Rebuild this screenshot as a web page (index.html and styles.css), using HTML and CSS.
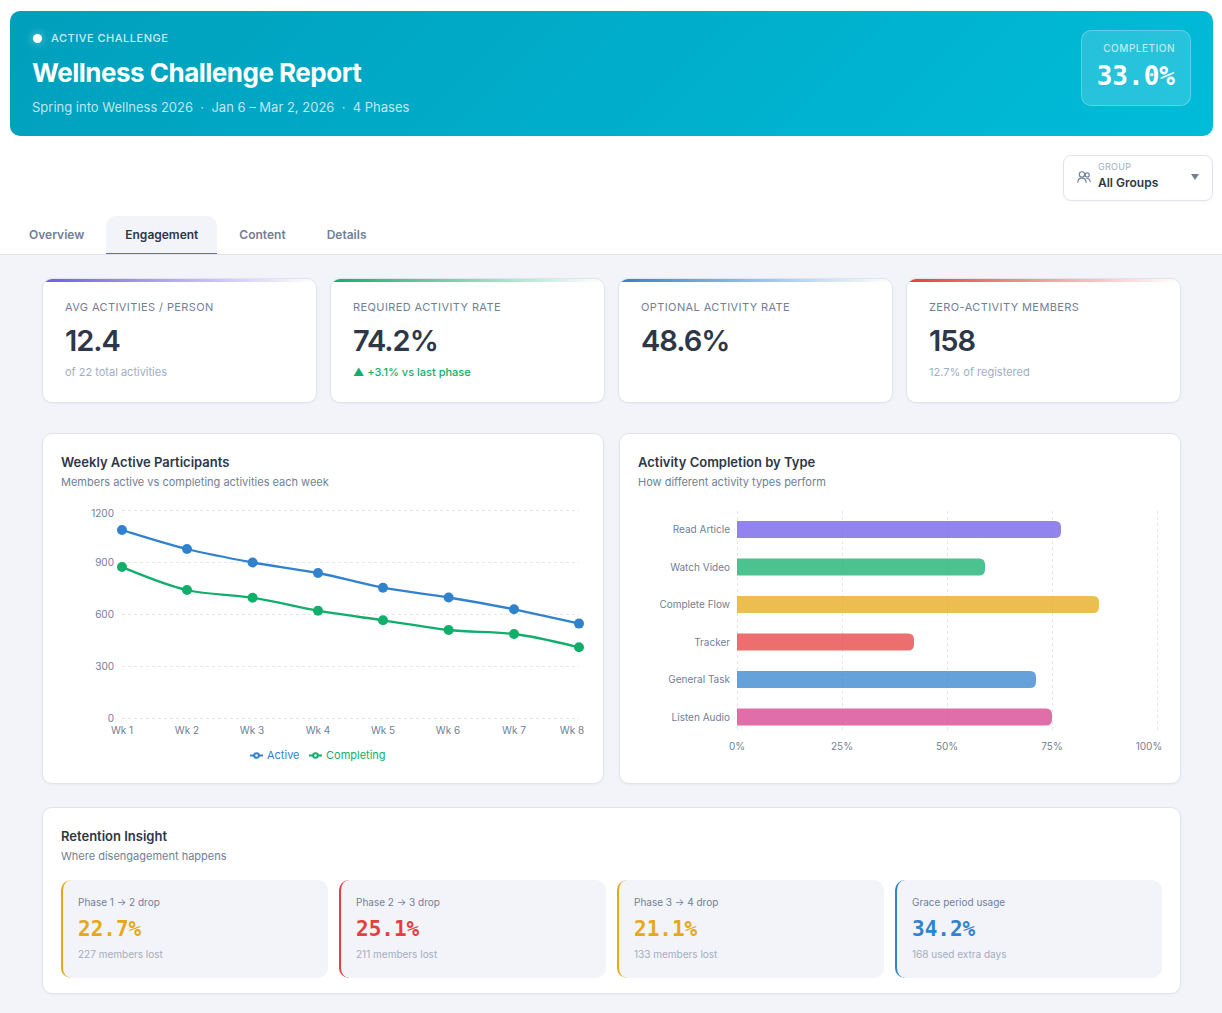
FILE: index.html
```html
<!DOCTYPE html>
<html lang="en">
<head>
    <meta charset="UTF-8">
    <meta name="viewport" content="width=device-width, initial-scale=1.0">
    <title>Wellness Challenge Report</title>
    <link rel="stylesheet" href="styles.css">
</head>
<body>
    <div class="top">
        <header class="hero">
            <div>
                <div class="hero-status"><span class="dot"></span>Active Challenge</div>
                <h1>Wellness Challenge Report</h1>
                <p class="hero-meta">Spring into Wellness 2026 &nbsp;·&nbsp; Jan 6 – Mar 2, 2026 &nbsp;·&nbsp; 4 Phases</p>
            </div>
            <div class="completion">
                <div class="completion-label">Completion</div>
                <div class="completion-value">33.0%</div>
            </div>
        </header>

        <div class="filters">
            <div class="filter">
                <svg class="filter-icon" viewBox="0 0 24 24" aria-hidden="true">
                    <circle cx="8.5" cy="7.5" r="4.5"/>
                    <path d="M1.500 21c0-4.500 3-7 7-7s7 2.500 7 7"/>
                    <circle cx="17.500" cy="8.500" r="3.500"/>
                    <path d="M17 14.500c3.500 0 5.500 2 5.500 5.500"/>
                </svg>
                <div class="filter-field">
                    <label for="group">Group</label>
                    <select id="group">
                        <option>All Groups</option>
                    </select>
                </div>
                <span class="filter-arrow" aria-hidden="true"></span>
            </div>
        </div>

        <nav class="tabs">
            <button class="tab">Overview</button>
            <button class="tab active">Engagement</button>
            <button class="tab">Content</button>
            <button class="tab">Details</button>
        </nav>
    </div>

    <main>
        <section class="stats">
            <div class="card stat purple">
                <div class="stat-label">Avg Activities / Person</div>
                <div class="stat-value">12.4</div>
                <div class="stat-note">of 22 total activities</div>
            </div>
            <div class="card stat green">
                <div class="stat-label">Required Activity Rate</div>
                <div class="stat-value">74.2%</div>
                <div class="stat-note up">▲ +3.1% vs last phase</div>
            </div>
            <div class="card stat blue">
                <div class="stat-label">Optional Activity Rate</div>
                <div class="stat-value">48.6%</div>
            </div>
            <div class="card stat red">
                <div class="stat-label">Zero-Activity Members</div>
                <div class="stat-value">158</div>
                <div class="stat-note">12.7% of registered</div>
            </div>
        </section>

        <section class="charts">
            <div class="card panel">
                <h2>Weekly Active Participants</h2>
                <p class="subtitle">Members active vs completing activities each week</p>
                <svg class="chart" viewBox="0 0 524 262">
                    <g class="grid">
                        <path d="M61 4.500H518M61 56.500H518M61 108.500H518M61 160.500H518M61 212.500H518"/>
                    </g>
                    <g class="axis end">
                        <text x="53" y="11">1200</text>
                        <text x="53" y="60">900</text>
                        <text x="53" y="112">600</text>
                        <text x="53" y="164">300</text>
                        <text x="53" y="216">0</text>
                    </g>
                    <g class="axis middle">
                        <text x="61" y="228">Wk 1</text>
                        <text x="126" y="228">Wk 2</text>
                        <text x="191" y="228">Wk 3</text>
                        <text x="257" y="228">Wk 4</text>
                        <text x="322" y="228">Wk 5</text>
                        <text x="387" y="228">Wk 6</text>
                        <text x="453" y="228">Wk 7</text>
                        <text x="511" y="228">Wk 8</text>
                    </g>
                    <!-- active -->
                    <g class="series blue">
                        <path d="M61,24C83,30.8 104,37.6 126,43C148,48.4 170,52.5 191.6,56.5C214,60.5 235,62.8 257,67C279,71.2 300,77.6 322,81.7C344,85.8 366,87.9 387.6,91.5C410,95.1 431,98.9 453,103.3C475,107.7 496,112.6 518,117.6"/>
                        <circle cx="61" cy="24" r="5"/>
                        <circle cx="126" cy="43" r="5"/>
                        <circle cx="191.6" cy="56.5" r="5"/>
                        <circle cx="257" cy="67" r="5"/>
                        <circle cx="322" cy="81.7" r="5"/>
                        <circle cx="387.6" cy="91.5" r="5"/>
                        <circle cx="453" cy="103.3" r="5"/>
                        <circle cx="518" cy="117.6" r="5"/>
                    </g>
                    <!-- completing -->
                    <g class="series green">
                        <path d="M61,61C83,69.9 104,78.9 126,84C148,89.1 170,88.2 191.6,91.7C214,95.2 235,100.9 257,104.7C279,108.5 300,111.1 322,114.3C344,117.5 366,121.7 387.6,124C410,126.3 431,125.3 453,128C475,130.7 496,136 518,141.3"/>
                        <circle cx="61" cy="61" r="5"/>
                        <circle cx="126" cy="84" r="5"/>
                        <circle cx="191.6" cy="91.7" r="5"/>
                        <circle cx="257" cy="104.7" r="5"/>
                        <circle cx="322" cy="114.3" r="5"/>
                        <circle cx="387.6" cy="124" r="5"/>
                        <circle cx="453" cy="128" r="5"/>
                        <circle cx="518" cy="141.3" r="5"/>
                    </g>
                    <g class="legend blue">
                        <path d="M189 249.500h4M198 249.500h4"/>
                        <circle cx="195.500" cy="249.500" r="2.300"/>
                        <text x="206" y="253">Active</text>
                    </g>
                    <g class="legend green">
                        <path d="M248 249.500h4M257 249.500h4"/>
                        <circle cx="254.500" cy="249.500" r="2.300"/>
                        <text x="265" y="253">Completing</text>
                    </g>
                </svg>
            </div>

            <div class="card panel">
                <h2>Activity Completion by Type</h2>
                <p class="subtitle">How different activity types perform</p>
                <svg class="chart" viewBox="0 0 524 262">
                    <g class="grid">
                        <path d="M99.500 5V227M204.500 5V227M309.500 5V227M414.500 5V227M519.500 5V227"/>
                    </g>
                    <g class="axis end">
                        <text x="92" y="27">Read Article</text>
                        <text x="92" y="65">Watch Video</text>
                        <text x="92" y="102">Complete Flow</text>
                        <text x="92" y="140">Tracker</text>
                        <text x="92" y="177">General Task</text>
                        <text x="92" y="215">Listen Audio</text>
                    </g>
                    <g class="bars">
                        <path class="purple" d="M99 15h318q6 0 6 6v5q0 6-6 6H99z"/>
                        <path class="green" d="M99 52.500h242q6 0 6 6v5q0 6-6 6H99z"/>
                        <path class="gold" d="M99 90h356q6 0 6 6v5q0 6-6 6H99z"/>
                        <path class="red" d="M99 127.500h171q6 0 6 6v5q0 6-6 6H99z"/>
                        <path class="blue" d="M99 165h293q6 0 6 6v5q0 6-6 6H99z"/>
                        <path class="pink" d="M99 202.500h309q6 0 6 6v5q0 6-6 6H99z"/>
                    </g>
                    <g class="axis middle">
                        <text x="99" y="244">0%</text>
                        <text x="204" y="244">25%</text>
                        <text x="309" y="244">50%</text>
                        <text x="414" y="244">75%</text>
                        <text x="511" y="244">100%</text>
                    </g>
                </svg>
            </div>
        </section>

        <section class="card panel retention">
            <h2>Retention Insight</h2>
            <p class="subtitle">Where disengagement happens</p>
            <div class="insights">
                <div class="insight gold">
                    <div class="insight-label">Phase 1 → 2 drop</div>
                    <div class="insight-value">22.7%</div>
                    <div class="insight-note">227 members lost</div>
                </div>
                <div class="insight red">
                    <div class="insight-label">Phase 2 → 3 drop</div>
                    <div class="insight-value">25.1%</div>
                    <div class="insight-note">211 members lost</div>
                </div>
                <div class="insight gold">
                    <div class="insight-label">Phase 3 → 4 drop</div>
                    <div class="insight-value">21.1%</div>
                    <div class="insight-note">133 members lost</div>
                </div>
                <div class="insight blue">
                    <div class="insight-label">Grace period usage</div>
                    <div class="insight-value">34.2%</div>
                    <div class="insight-note">168 used extra days</div>
                </div>
            </div>
        </section>
    </main>
</body>
</html>
```

FILE: styles.css
```css
:root {
    --bg: #f3f4f9;
    --border: #e2e4ed;
    --text: #2d3748;
    --muted: #718096;
    --light: #a0aec0;
    --mono: "DejaVu Sans Mono", monospace;
}

* {
    margin: 0;
    padding: 0;
    box-sizing: border-box;
}

body {
    background: var(--bg);
    color: var(--text);
    font-family: Inter, sans-serif;
    font-size: 13px;
}

button, select {
    font-family: inherit;
}

/* accent colours */
.purple { --accent: #6c5ce7; }
.green { --accent: #0fae6b; }
.blue { --accent: #3182ce; }
.red { --accent: #e53e3e; }
.gold { --accent: #e6a817; }
.pink { --accent: #d53f8c; }

.top {
    background: #fff;
    padding: 11px 9px 0 10px;
    border-bottom: 1px solid var(--border);
}

.hero {
    display: flex;
    justify-content: space-between;
    align-items: flex-start;
    padding: 19px 22px;
    border-radius: 10px;
    background: linear-gradient(135deg, #009fbc, #00bcd8);
    color: #fff;
}

.hero-status {
    display: flex;
    align-items: center;
    gap: 9px;
    line-height: 16px;
    font-size: 11px;
    font-weight: 500;
    letter-spacing: 0.5px;
    text-transform: uppercase;
    color: rgba(255, 255, 255, 0.8);
}

.dot {
    width: 9px;
    height: 9px;
    margin-left: 1px;
    border-radius: 50%;
    background: #fff;
    box-shadow: 0 0 8px rgba(255, 255, 255, 0.5);
}

h1 {
    margin: 10px 0 7px;
    font-size: 26px;
    line-height: 34px;
    font-weight: 700;
    letter-spacing: -0.5px;
}

.hero-meta {
    font-size: 13px;
    line-height: 20px;
    color: rgba(255, 255, 255, 0.75);
}

.completion {
    padding: 9px 15px;
    border: 1px solid rgba(255, 255, 255, 0.25);
    border-radius: 10px;
    background: rgba(255, 255, 255, 0.15);
    text-align: right;
}

.completion-label {
    font-size: 10px;
    line-height: 16px;
    font-weight: 500;
    letter-spacing: 0.5px;
    text-transform: uppercase;
    color: rgba(255, 255, 255, 0.7);
}

.completion-value {
    font-family: var(--mono);
    font-size: 26px;
    line-height: 40px;
    font-weight: 700;
}

.filters {
    display: flex;
    justify-content: flex-end;
    margin: 19px 0 15px;
}

.filter {
    display: flex;
    align-items: center;
    gap: 7px;
    width: 150px;
    height: 46px;
    padding: 0 13px 2px;
    border: 1px solid var(--border);
    border-radius: 8px;
    box-shadow: 0 1px 3px rgba(0, 0, 0, 0.04);
}

.filter-icon {
    width: 14px;
    height: 14px;
    fill: none;
    stroke: var(--muted);
    stroke-width: 2;
    stroke-linecap: round;
}

.filter-field {
    flex: 1;
    display: flex;
    flex-direction: column;
}

.filter label {
    font-size: 9px;
    line-height: 12px;
    letter-spacing: 0.3px;
    text-transform: uppercase;
    color: var(--light);
}

.filter select {
    appearance: none;
    width: 100%;
    border: none;
    outline: none;
    background: none;
    color: var(--text);
    font-size: 12px;
    line-height: 20px;
    font-weight: 600;
    cursor: pointer;
}

.filter-arrow {
    border: 4px solid transparent;
    border-top: 6px solid var(--muted);
    border-bottom: none;
    pointer-events: none;
}

.tabs {
    display: flex;
    gap: 3px;
}

.tab {
    height: 38px;
    padding: 0 19px;
    border: none;
    border-bottom: 1px solid transparent;
    border-radius: 10px 10px 0 0;
    background: none;
    color: var(--muted);
    font-size: 12px;
    font-weight: 600;
    cursor: pointer;
}

.tab.active {
    background: var(--bg);
    border-image: linear-gradient(#6c5ce7, #6c5ce7) 1;
    color: var(--text);
}

main {
    padding: 23px 41px 19px 42px;
}

.card {
    background: #fff;
    border: 1px solid var(--border);
    border-radius: 10px;
    box-shadow: 0 1px 3px rgba(0, 0, 0, 0.04);
}

.stats {
    display: grid;
    grid-template-columns: repeat(4, 1fr);
    gap: 13px;
}

.stat {
    position: relative;
    overflow: hidden;
    padding: 21px 22px 22px;
}

.stat::before {
    content: '';
    position: absolute;
    top: 0;
    left: 0;
    right: 0;
    height: 3px;
    background: linear-gradient(90deg, var(--accent), transparent);
}

.stat-label {
    font-size: 11px;
    line-height: 14px;
    letter-spacing: 0.4px;
    text-transform: uppercase;
    color: var(--muted);
}

.stat-value {
    margin: 9px 0 5px;
    font-size: 29px;
    line-height: 36px;
    font-weight: 600;
    letter-spacing: -1px;
}

.stat-note {
    font-size: 11px;
    line-height: 16px;
    color: var(--light);
}

.stat-note.up {
    color: var(--accent);
    font-weight: 500;
}

.charts {
    display: grid;
    grid-template-columns: repeat(2, 1fr);
    gap: 15px;
    margin: 30px 0 23px;
}

.panel {
    padding: 18px 18px 15px;
}

h2 {
    font-size: 13px;
    line-height: 20px;
    font-weight: 600;
}

.subtitle {
    margin: 2px 0 16px;
    font-size: 11px;
    line-height: 16px;
    color: var(--muted);
}

.chart {
    display: block;
    width: 100%;
    height: auto;
}

.grid path {
    fill: none;
    stroke: #e4e6ea;
    stroke-dasharray: 3 3;
}

.axis text {
    font-size: 10px;
    fill: var(--muted);
}

.end text {
    text-anchor: end;
}

.middle text {
    text-anchor: middle;
}

.series path {
    fill: none;
    stroke: var(--accent);
    stroke-width: 2.3;
}

.series circle {
    fill: var(--accent);
}

.legend path, .legend circle {
    fill: none;
    stroke: var(--accent);
    stroke-width: 2;
}

.legend text {
    font-size: 11px;
    fill: var(--accent);
}

.bars path {
    fill: var(--accent);
    fill-opacity: 0.75;
}

.insights {
    display: grid;
    grid-template-columns: repeat(4, 1fr);
    gap: 11px;
}

.insight {
    padding: 14px 16px 16px 15px;
    border-left: 2px solid var(--accent);
    border-radius: 10px;
    background: var(--bg);
}

.insight-label {
    font-size: 10px;
    line-height: 16px;
    color: var(--muted);
}

.insight-value {
    margin: 6px 0 4px;
    font-family: var(--mono);
    font-size: 21px;
    line-height: 26px;
    font-weight: 700;
    color: var(--accent);
}

.insight-note {
    font-size: 10px;
    line-height: 16px;
    color: var(--light);
}

@media (max-width: 800px) {
    .stats, .insights {
        grid-template-columns: repeat(2, 1fr);
    }

    .charts {
        grid-template-columns: 1fr;
    }
}
```
